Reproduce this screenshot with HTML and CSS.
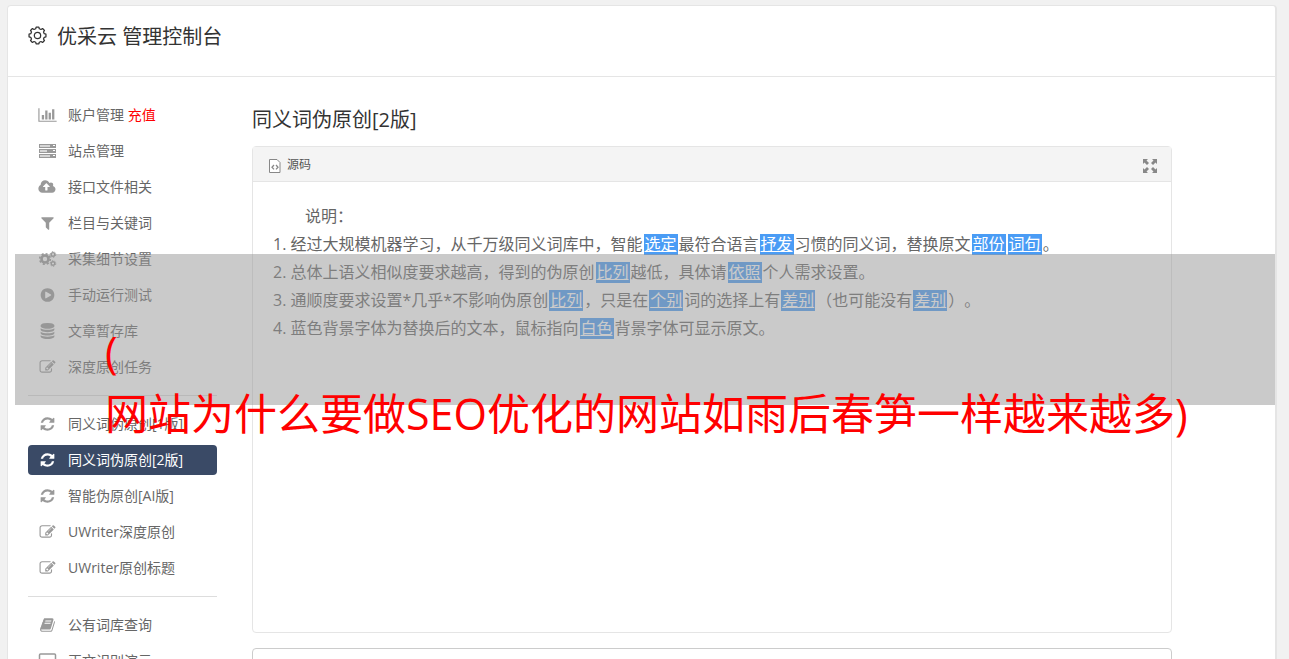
FILE: index.html
```html
<!doctype html>
<html lang="zh-CN">
<head>
    <meta charset="utf-8">
    <title>优采云 管理控制台</title>
    <link rel="stylesheet" href="styles.css">
</head>
<body>

    <!-- 图标库 -->
    <svg class="sprite">
        <symbol id="i-chart" viewBox="0 0 2048 1792"><path d="M640 896v512h-256v-512h256zm384-512v1024h-256v-1024h256zm1024 1152v128h-2048v-1536h128v1408h1920zm-640-896v768h-256v-768h256zm384-384v1152h-256v-1152h256z"/></symbol>
        <symbol id="i-server" viewBox="0 0 19 16"><path fill-rule="evenodd" d="M1 1h17v4H1zM2 2v2h10V2zM1 6h17v4H1zM2 7v2h7V7zM1 11h17v4H1zM2 12v2h10v-2z"/><path opacity=".4" d="M2 2h10v2H2zM2 7h7v2H2zM2 12h10v2H2z"/><path fill="#fff" d="M15 2h2v1h-2zM15 7h2v1h-2zM15 12h2v1h-2z"/></symbol>
        <symbol id="i-cloud" viewBox="0 0 2048 1792"><path d="M1280 864q0-14-9-23l-352-352q-9-9-23-9t-23 9l-351 351q-10 12-10 24 0 14 9 23t23 9h224v352q0 13 9.500 22.500t22.500 9.500h192q13 0 22.500-9.500t9.500-22.500v-352h224q13 0 22.500-9.500t9.500-22.500zm640 288q0 159-112.500 271.500t-271.500 112.500h-1088q-185 0-316.500-131.500t-131.500-316.500q0-130 70-240t188-165q-2-30-2-43 0-212 150-362t362-150q156 0 285.500 87t188.500 231q71-62 166-62 106 0 181 75t75 181q0 76-41 138 130 31 213.500 135.500t83.500 238.500z"/></symbol>
        <symbol id="i-filter" viewBox="0 0 1792 1792"><path d="M1595 295q17 41-14 70l-493 493v742q0 42-39 59-13 5-25 5-27 0-45-19l-256-256q-19-19-19-45v-486l-493-493q-31-29-14-70 17-39 59-39h1280q42 0 59 39z"/></symbol>
        <symbol id="i-cogs" viewBox="0 0 18 16">
            <g fill="none" stroke="currentColor">
                <circle cx="6.500" cy="8" r="3.500" stroke-width="2.600"/>
                <circle cx="6.500" cy="8" r="5.300" stroke-width="1.600" stroke-dasharray="2.080 2.080"/>
                <circle cx="14.500" cy="3.500" r="1.800" stroke-width="1.400"/>
                <circle cx="14.500" cy="3.500" r="2.800" stroke-width="1" stroke-dasharray="1.460 1.460"/>
                <circle cx="14.500" cy="12.500" r="1.800" stroke-width="1.400"/>
                <circle cx="14.500" cy="12.500" r="2.800" stroke-width="1" stroke-dasharray="1.460 1.460"/>
            </g>
        </symbol>
        <symbol id="i-play" viewBox="0 0 1792 1792"><path d="M896 128q209 0 385.500 103t279.500 279.500 103 385.500-103 385.500-279.500 279.500-385.500 103-385.500-103-279.500-279.500-103-385.500 103-385.500 279.500-279.500 385.500-103zm384 823q32-18 32-55t-32-55l-544-320q-31-19-64-1-32 19-32 56v640q0 37 32 56 16 8 32 8 17 0 32-9z"/></symbol>
        <symbol id="i-database" viewBox="0 0 1792 1792"><path d="M896 768q237 0 443-43t325-127v170q0 69-103 128t-280 93.500-385 34.500-385-34.500-280-93.500-103-128v-170q119 84 325 127t443 43zm0 768q237 0 443-43t325-127v170q0 69-103 128t-280 93.500-385 34.500-385-34.500-280-93.500-103-128v-170q119 84 325 127t443 43zm0-384q237 0 443-43t325-127v170q0 69-103 128t-280 93.500-385 34.500-385-34.500-280-93.500-103-128v-170q119 84 325 127t443 43zm0-1152q208 0 385 34.500t280 93.500 103 128v128q0 69-103 128t-280 93.500-385 34.500-385-34.500-280-93.500-103-128v-128q0-69 103-128t280-93.500 385-34.500z"/></symbol>
        <symbol id="i-edit" viewBox="0 0 1792 1792"><path d="M888 1184l116-116-152-152-116 116v56h96v96h56zm440-720q-16-16-33 1l-350 350q-17 17-1 33t33-1l350-350q17-17 1-33zm80 594v190q0 119-84.500 203.500t-203.500 84.500h-832q-119 0-203.500-84.500t-84.500-203.500v-832q0-119 84.500-203.500t203.500-84.500h832q63 0 117 25 15 7 18 23 3 17-9 29l-49 49q-14 14-32 8-23-6-45-6h-832q-66 0-113 47t-47 113v832q0 66 47 113t113 47h832q66 0 113-47t47-113v-126q0-13 9-22l64-64q15-15 35-7t20 29zm-96-738l288 288-672 672h-288v-288zm444 132l-92 92-288-288 92-92q28-28 68-28t68 28l152 152q28 28 28 68t-28 68z"/></symbol>
        <symbol id="i-refresh" viewBox="0 0 1792 1792"><path d="M1639 1056q0 5-1 7-64 268-268 434.500t-478 166.500q-146 0-282.500-55t-243.500-157l-129 129q-19 19-45 19t-45-19-19-45v-448q0-26 19-45t45-19h448q26 0 45 19t19 45-19 45l-137 137q71 66 161 102t187 36q134 0 250-65t186-179q11-17 53-117 8-23 30-23h192q13 0 22.500 9.500t9.500 22.500zm25-800v448q0 26-19 45t-45 19h-448q-26 0-45-19t-19-45 19-45l138-138q-148-137-349-137-134 0-250 65t-186 179q-11 17-53 117-8 23-30 23h-199q-13 0-22.500-9.500t-9.500-22.500v-7q65-268 270-434.500t480-166.500q146 0 284 55.500t245 156.500l130-129q19-19 45-19t45 19 19 45z"/></symbol>
        <symbol id="i-book" viewBox="0 0 1792 1792"><path d="M1703 478q40 57 18 129l-275 906q-19 64-76.500 107.500t-122.500 43.500h-923q-77 0-148.500-53.500t-99.500-131.500q-24-67-2-127 0-4 3-27t4-37q1-8-3-21.500t-3-19.500q2-11 8-21t16.500-23.500 16.500-23.500q23-38 45-91.500t30-91.500q3-10 .5-30t-.5-28q3-11 17-28t17-23q21-36 42-92t25-90q1-9-2.500-32t.5-28q4-13 22-30.500t22-22.500q19-26 42.500-84.500t27.500-96.500q1-8-3-25.500t-2-26.500q2-8 9-18t18-23 17-21q8-12 16.500-30.500t15-35 16-36 19.500-32 26.500-23.500 36-11.500 47.500 5.500l-1 3q38-9 51-9h761q74 0 114 56t18 130l-274 906q-36 119-71.500 153.500t-128.500 34.500h-869q-27 0-38 15-11 16-1 43 24 70 144 70h923q29 0 56-15.500t35-41.500l300-987q7-22 5-57 38 15 59 43zm-1064 2q-4 13 2 22.500t20 9.500h608q13 0 25.500-9.500t16.500-22.500l21-64q4-13-2-22.500t-20-9.500h-608q-13 0-25.500 9.500t-16.500 22.500zm-83 256q-4 13 2 22.500t20 9.500h608q13 0 25.500-9.500t16.500-22.500l21-64q4-13-2-22.500t-20-9.500h-608q-13 0-25.500 9.500t-16.500 22.500z"/></symbol>
        <symbol id="i-laptop" viewBox="0 0 18 16"><rect x="1" y="1" width="16" height="11" rx="1" fill="none" stroke="currentColor" stroke-width="1.500"/><path d="M0 14h18v1H0z"/></symbol>
        <symbol id="i-gear" viewBox="0 0 18 18">
            <g fill="none" stroke="currentColor" stroke-width="1.200">
                <path stroke-linejoin="round" d="M7.300 2.600 7.700 1h2.600l.4 1.600 1.600.7 1.500-.9 1.800 1.800-.9 1.500.7 1.600 1.600.4v2.600l-1.600.4-.7 1.600.9 1.500-1.800 1.800-1.500-.9-1.600.7-.4 1.600H7.700l-.4-1.600-1.600-.7-1.500.9-1.800-1.800.9-1.500-.7-1.600L1 10.300V7.700l1.600-.4.7-1.600-.9-1.500 1.800-1.800 1.500.9z"/>
                <circle cx="9" cy="9" r="3"/>
            </g>
        </symbol>
        <symbol id="i-code" viewBox="0 0 12 14"><path fill="#fff" stroke="currentColor" d="M.5.500H8L11 3.500v10H.500z"/><path fill="none" stroke="currentColor" stroke-width="1.300" d="M5 6 3 8.200l2 2.200M7 6l2 2.200-2 2.200"/></symbol>
        <symbol id="i-full" viewBox="0 0 14 14"><path d="M0 0h5L3.500 1.500 6 4 4 6 1.500 3.500 0 5zM14 0v5l-1.500-1.500L10 6 8 4l2.500-2.500L9 0zM0 14V9l1.500 1.500L4 8l2 2-2.500 2.500L5 14zM14 14H9l1.500-1.500L8 10l2-2 2.500 2.500L14 9z"/></symbol>
    </svg>

    <div class="panel">
        <header class="top">
            <svg class="gear"><use href="#i-gear"/></svg>
            <h1>优采云 管理控制台</h1>
        </header>

        <div class="main">
            <nav class="side">
                <ul>
                    <li><a href="#"><svg><use href="#i-chart"/></svg>账户管理 <em>充值</em></a></li>
                    <li><a href="#"><svg><use href="#i-server"/></svg>站点管理</a></li>
                    <li><a href="#"><svg><use href="#i-cloud"/></svg>接口文件相关</a></li>
                    <li><a href="#"><svg><use href="#i-filter"/></svg>栏目与关键词</a></li>
                    <li><a href="#"><svg><use href="#i-cogs"/></svg>采集细节设置</a></li>
                    <li><a href="#"><svg><use href="#i-play"/></svg>手动运行测试</a></li>
                    <li><a href="#"><svg><use href="#i-database"/></svg>文章暂存库</a></li>
                    <li><a href="#"><svg><use href="#i-edit"/></svg>深度原创任务</a></li>
                </ul>
                <ul>
                    <li><a href="#"><svg><use href="#i-refresh"/></svg>同义词伪原创[1版]</a></li>
                    <li><a href="#" class="current"><svg><use href="#i-refresh"/></svg>同义词伪原创[2版]</a></li>
                    <li><a href="#"><svg><use href="#i-refresh"/></svg>智能伪原创[AI版]</a></li>
                    <li><a href="#"><svg><use href="#i-edit"/></svg>UWriter深度原创</a></li>
                    <li><a href="#"><svg><use href="#i-edit"/></svg>UWriter原创标题</a></li>
                </ul>
                <ul>
                    <li><a href="#"><svg><use href="#i-book"/></svg>公有词库查询</a></li>
                    <li><a href="#"><svg><use href="#i-laptop"/></svg>正文识别演示</a></li>
                </ul>
            </nav>

            <div class="content">
                <h2 id="title">同义词伪原创[2版]</h2>
                <div class="editor">
                    <div class="toolbar">
                        <button type="button"><svg class="code"><use href="#i-code"/></svg>源码</button>
                        <button type="button" aria-labelledby="title"><svg class="full"><use href="#i-full"/></svg></button>
                    </div>
                    <div class="text">
                        <p>说明：</p>
                        <ol>
                            <li>经过大规模机器学习，从千万级同义词库中，智能<u>选定</u>最符合语言<u>抒发</u>习惯的同义词，替换原文<u>部份</u><u>词句</u>。</li>
                            <li>总体上语义相似度要求越高，得到的伪原创<u>比列</u>越低，具体请<u>依照</u>个人需求设置。</li>
                            <li>通顺度要求设置*几乎*不影响伪原创<u>比列</u>，只是在<u>个别</u>词的选择上有<u>差别</u>（也可能没有<u>差别</u>）。</li>
                            <li>蓝色背景字体为替换后的文本，鼠标指向<u>白色</u>背景字体可显示原文。</li>
                        </ol>
                    </div>
                </div>
                <textarea class="result" aria-labelledby="title"></textarea>
            </div>
        </div>
    </div>

    <!-- 标题浮层 -->
    <div class="cover">
        <p>(<br>网站为什么要做SEO优化的网站如雨后春笋一样越来越多)</p>
    </div>

</body>
</html>
```
FILE: styles.css
```css
body, h1, h2, ul, ol, li, p {
    margin: 0;
    padding: 0;
    list-style: none;
    font-weight: normal;
}

body {
    height: 100vh;
    overflow: hidden;
    background: #f1f1f1;
    color: #666;
    font: 14px/20px "Open Sans", "Noto Sans CJK SC", sans-serif;
}

svg {
    fill: currentColor;
}

.sprite {
    display: none;
}

.panel {
    margin: 5px 12px 0 7px;
    border: 1px solid #e5e5e5;
    border-right-width: 2px;
    border-radius: 4px;
    background: #fff;
}

.top {
    display: flex;
    align-items: center;
    gap: 10px;
    height: 62px;
    padding: 0 20px 8px;
    border-bottom: 1px solid #e5e5e5;
    color: #333;
}

.top h1, .content h2 {
    font-size: 20px;
    line-height: 28px;
    color: #333;
}

.gear {
    width: 19px;
    height: 19px;
    margin-bottom: 3px;
}

.main {
    display: flex;
    gap: 35px;
    padding: 23px 103px 20px 20px;
}

/* 左侧菜单 */
.side {
    width: 189px;
    flex: none;
}

.side ul + ul {
    margin-top: 7px;
    padding-top: 13px;
    border-top: 1px solid #ddd;
}

.side li {
    padding-bottom: 6px;
}

.side a {
    display: flex;
    align-items: center;
    height: 30px;
    padding-left: 10px;
    border-radius: 4px;
    color: #666;
    text-decoration: none;
    white-space: pre;
}

.side svg {
    width: 19px;
    height: 16px;
    margin-right: 11px;
    color: #999;
}

.side .current, .side .current svg {
    background: #3a4a66;
    color: #fff;
}

.side em {
    font-style: normal;
    color: #f00;
}

/* 右侧编辑器 */
.content {
    flex: 1;
    padding-top: 6px;
}

.editor {
    margin-top: 12px;
    border: 1px solid #e5e5e5;
    border-radius: 4px;
}

.toolbar {
    display: flex;
    justify-content: space-between;
    height: 34px;
    padding: 0 14px 0 16px;
    border-bottom: 1px solid #e5e5e5;
    background: #f4f4f4;
}

.toolbar button {
    display: flex;
    align-items: center;
    gap: 6px;
    padding: 2px 0 0;
    border: 0;
    background: none;
    color: #555;
    font: inherit;
    font-size: 12px;
}

.toolbar svg {
    margin-top: 2px;
    color: #888;
}

.code {
    width: 12px;
    height: 14px;
}

.full {
    width: 14px;
    height: 14px;
}

.text {
    min-height: 410px;
    padding: 20px;
    font-size: 16px;
    line-height: 28px;
    text-spacing-trim: space-all;
}

.text p {
    text-indent: 2em;
}

.text li {
    list-style: decimal inside;
}

.text u {
    display: inline-block;
    height: 21px;
    margin: 0 1px;
    padding: 0 1px;
    line-height: 21px;
    background: #4a9cf5;
    color: #fff;
}

.result {
    display: block;
    box-sizing: border-box;
    width: 100%;
    height: 200px;
    margin-top: 15px;
    border: 1px solid #ccc;
    border-radius: 4px;
    resize: none;
}

/* 浮层盖在页面上面 */
.cover {
    position: absolute;
    top: 254px;
    left: 15px;
    right: 14px;
    box-sizing: border-box;
    height: 151px;
    padding: 67px 80px 0 90px;
    background: rgba(150, 150, 150, .5);
    color: #f00;
    font-size: 43px;
    line-height: 62px;
    white-space: nowrap;
}
```
